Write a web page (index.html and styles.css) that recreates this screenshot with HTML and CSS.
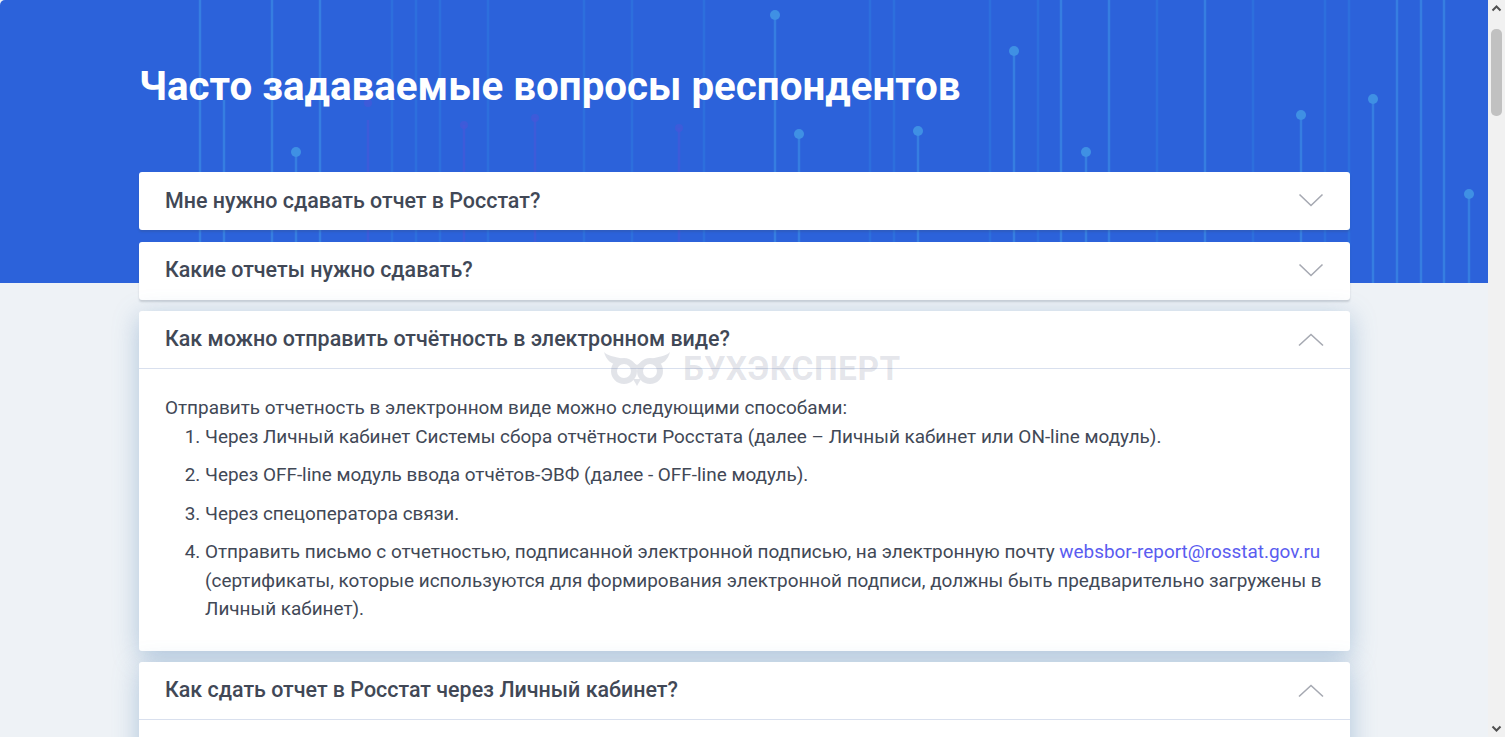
FILE: index.html
```html
<!DOCTYPE html>
<html lang="ru">
<head>
    <meta charset="UTF-8">
    <meta name="viewport" content="width=device-width, initial-scale=1.0">
    <title>Часто задаваемые вопросы респондентов</title>
    <link rel="stylesheet" href="styles.css">
</head>
<body>
    <div class="page">
        <section class="hero">
            <svg class="hero-lines" viewBox="0 0 1488 283" width="1488" height="283" aria-hidden="true">
                <g class="line-bright">
                    <path d="M200 0V283M272 0V283M320 0V283M1205 0V283M1397 0V283M1421 0V283M1444 0V283M1061 0V283M1109 0V283"/>
                    <path d="M296 152V283M775 15V283M799 134V283M918 131V283M1014 51V283M1086 152V283M1301 115V283M1373 99V283M1469 194V283M224 100V283"/>
                </g>
                <g class="line-dim">
                    <path d="M392 0V283M416 0V283M440 0V283M488 0V283M584 0V283M632 0V283M704 0V283M870 0V283M894 0V283M990 0V283M1038 0V283M1157 0V283M1253 0V283M1325 0V283M1349 0V283"/>
                </g>
                <g class="line-violet">
                    <path d="M368 120V283M464 125V283M535 118V283M679 128V283"/>
                    <circle cx="368" cy="103" r="4"/>
                    <circle cx="464" cy="125" r="4"/>
                    <circle cx="535" cy="118" r="4"/>
                    <circle cx="679" cy="128" r="4"/>
                </g>
                <g class="dot-bright">
                    <circle cx="296" cy="152" r="5"/>
                    <circle cx="775" cy="15" r="5"/>
                    <circle cx="799" cy="134" r="5"/>
                    <circle cx="918" cy="131" r="5"/>
                    <circle cx="1014" cy="51" r="5"/>
                    <circle cx="1086" cy="152" r="5"/>
                    <circle cx="1301" cy="115" r="5"/>
                    <circle cx="1373" cy="99" r="5"/>
                    <circle cx="1469" cy="194" r="5"/>
                </g>
            </svg>
            <h1 class="hero-title">Часто задаваемые вопросы респондентов</h1>
        </section>

        <div class="faq">
            <div class="faq-item">
                <div class="faq-head">
                    <span class="faq-question">Мне нужно сдавать отчет в Росстат?</span>
                    <svg class="chevron" viewBox="0 0 26 14" width="26" height="14"><path d="M1.5 1.5L13 12.5L24.5 1.5"/></svg>
                </div>
            </div>
            <div class="faq-item">
                <div class="faq-head">
                    <span class="faq-question">Какие отчеты нужно сдавать?</span>
                    <svg class="chevron" viewBox="0 0 26 14" width="26" height="14"><path d="M1.5 1.5L13 12.5L24.5 1.5"/></svg>
                </div>
            </div>
            <div class="faq-item open">
                <div class="faq-head">
                    <span class="faq-question">Как можно отправить отчётность в электронном виде?</span>
                    <svg class="chevron" viewBox="0 0 26 14" width="26" height="14"><path d="M1 12.5L13 1.5L25 12.5"/></svg>
                </div>
                <div class="faq-body">
                    <p class="faq-lead">Отправить отчетность в электронном виде можно следующими способами:</p>
                    <ol class="faq-list">
                        <li>Через Личный кабинет Системы сбора отчётности Росстата (далее – Личный кабинет или ON-line модуль).</li>
                        <li>Через OFF-line модуль ввода отчётов-ЭВФ (далее - OFF-line модуль).</li>
                        <li>Через спецоператора связи.</li>
                        <li>Отправить письмо с отчетностью, подписанной электронной подписью, на электронную почту <a href="#">websbor-report@rosstat.gov.ru</a> (сертификаты, которые используются для формирования электронной подписи, должны быть предварительно загружены в Личный кабинет).</li>
                    </ol>
                </div>
            </div>
            <div class="faq-item open">
                <div class="faq-head">
                    <span class="faq-question">Как сдать отчет в Росстат через Личный кабинет?</span>
                    <svg class="chevron" viewBox="0 0 26 14" width="26" height="14"><path d="M1 12.5L13 1.5L25 12.5"/></svg>
                </div>
                <div class="faq-body"></div>
            </div>
        </div>

        <div class="watermark">
            <svg class="owl" viewBox="0 0 68 34" width="68" height="34" aria-hidden="true">
                <path class="owl-wings" d="M1 0C8 7 22 4 34 13C46 4 60 7 67 0C65 8 60 12 53 13C44 10 38 13 34 17C30 13 24 10 15 13C8 12 3 8 1 0Z"/>
                <circle class="owl-eye" cx="21" cy="19" r="10"/>
                <circle class="owl-eye" cx="47" cy="19" r="10"/>
                <path class="owl-wings" d="M30 27H38L34 34Z"/>
            </svg>
            <span>БУХЭКСПЕРТ</span>
        </div>
    </div>

    <div class="scrollbar">
        <svg class="scroll-arrow" viewBox="0 0 17 17" width="17" height="17"><path d="M4.5 10.5L8.5 6.5L12.5 10.5"/></svg>
        <div class="scroll-track"><div class="scroll-thumb"></div></div>
        <svg class="scroll-arrow" viewBox="0 0 17 17" width="17" height="17"><path d="M4.5 6.5L8.5 10.5L12.5 6.5"/></svg>
    </div>
</body>
</html>
```

FILE: styles.css
```css
html, body {
    height: 100%;
}
body {
    font-family: Roboto, "Noto Sans", sans-serif;
    display: flex;
    margin: 0;
    overflow: hidden;
    background-color: #f1f1f1;
    color: #414856;
}
.page {
    position: relative;
    flex: 1;
    min-width: 0;
    overflow: hidden;
    background-color: #eef2f6;
}
.hero {
    position: relative;
    height: 283px;
    padding: 65px 0 0 139px;
    box-sizing: border-box;
    background-color: #2c62da;
    border-top-left-radius: 5px;
    overflow: hidden;
}
.hero-lines {
    position: absolute;
    top: 0;
    left: 0;
    filter: blur(0.6px);
}
.line-bright path {
    stroke: #3a8ae4;
    stroke-width: 2.5;
    opacity: 0.7;
    fill: none;
}
.line-dim path {
    stroke: #2f78e0;
    stroke-width: 2.5;
    opacity: 0.6;
    fill: none;
}
.line-violet path {
    stroke: #4a56d8;
    stroke-width: 2.5;
    opacity: 0.6;
    fill: none;
}
.line-violet circle {
    fill: #4a56d8;
    opacity: 0.6;
}
.dot-bright circle {
    fill: #3f90e4;
}
.hero-title {
    position: relative;
    margin: 0;
    font-size: 40.3px;
    line-height: 44px;
    font-weight: 700;
    color: white;
}
.faq {
    display: flex;
    flex-direction: column;
    gap: 11.5px;
    width: 1211px;
    margin: -111px 0 0 139px;
}
.faq-item {
    position: relative;
    background-color: white;
    border-radius: 3px;
    box-shadow: 0 2px 2px rgba(60, 70, 90, 0.2);
}
.faq-item.open {
    box-shadow: 0 6px 26px rgba(80, 130, 180, 0.4);
}
.faq-head {
    display: flex;
    justify-content: space-between;
    align-items: center;
    box-sizing: border-box;
    height: 58px;
    padding: 0 26px 2px;
}
.open .faq-head {
    border-bottom: 1px solid #d9e0ee;
}
.open .chevron {
    margin-top: 3px;
}
.faq-question {
    font-size: 21.45px;
    font-weight: 500;
}
.chevron path {
    fill: none;
    stroke: #a6a9b2;
    stroke-width: 1.6;
}
.faq-body {
    padding: 25px 26px 27px;
    font-size: 18.93px;
    line-height: 28.5px;
}
.faq-lead {
    margin: 0;
}
.faq-list {
    margin: 0;
    padding-left: 40px;
}
.faq-list li {
    margin-bottom: 10px;
}
.faq-list li:last-child {
    margin-bottom: 0;
}
.faq-list a {
    color: #5a5cf0;
    text-decoration: none;
}
.watermark {
    position: absolute;
    top: 352px;
    left: 603px;
    display: flex;
    align-items: center;
    gap: 12px;
    color: rgba(90, 100, 130, 0.17);
    font-size: 33.5px;
    line-height: 34px;
    font-weight: 700;
    letter-spacing: 0.5px;
}
.owl {
    opacity: 0.17;
}
.owl-wings {
    fill: #5a6482;
}
.owl-eye {
    fill: none;
    stroke: #5a6482;
    stroke-width: 6;
}
.scrollbar {
    display: flex;
    flex-direction: column;
    width: 17px;
    flex-shrink: 0;
}
.scroll-arrow path {
    fill: none;
    stroke: #505050;
    stroke-width: 2;
}
.scroll-track {
    flex: 1;
    padding-top: 12px;
}
.scroll-thumb {
    width: 11px;
    height: 87px;
    margin: 0 auto;
    border-radius: 5px;
    background-color: #c1c1c1;
}
```
